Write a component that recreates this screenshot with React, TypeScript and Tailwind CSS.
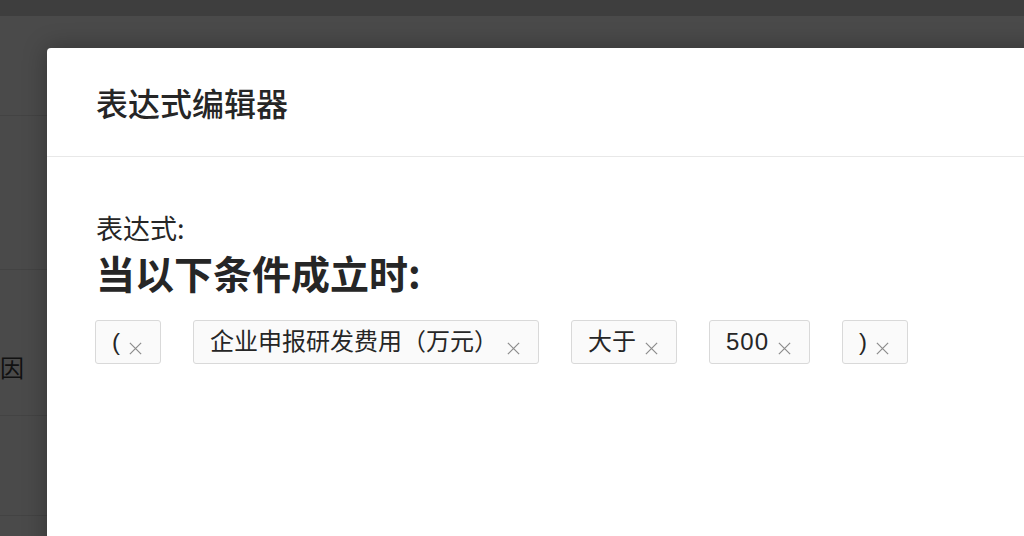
import { ReactNode } from 'react'

const font = { fontFamily: '"Noto Sans CJK SC", "Noto Sans", sans-serif' }

function CloseIcon() {
  return (
    <svg viewBox="0 0 16 16" className="h-[15px] w-[15px] shrink-0 translate-y-[6px] text-[#8c8c8c]" fill="none" stroke="currentColor" strokeWidth="1.3">
      <path d="M2 2 L14 14 M14 2 L2 14" />
    </svg>
  )
}

function Tag({ children, wide }: { children: ReactNode; wide?: boolean }) {
  return (
    <div className="flex h-[44px] items-center gap-[8px] rounded-[3px] border border-[#d9d9d9] bg-[#fafafa] pl-4 pr-[17px] text-[24px] leading-none text-[#262626]">
      <span
        className={wide ? 'tracking-[1px]' : ''}
        style={{ fontFamily: '"Liberation Sans", "Noto Sans CJK SC", sans-serif' }}
      >
        {children}
      </span>
      <CloseIcon />
    </div>
  )
}

export default function App() {
  const tags = ['(', '企业申报研发费用（万元）', '大于', '500', ')']

  return (
    <div className="relative h-[536px] w-[1024px] overflow-hidden bg-[#4a4a4a]" style={font}>
      {/* page behind the mask */}
      <div className="h-[16px] bg-[#3e3e3e]" />
      <div className="h-[100px] border-b border-[#434343]" />
      <div className="h-[154px] border-b border-[#434343]" />
      <div className="h-[146px] border-b border-[#434343] pt-[79px] text-[24px] leading-[36px] text-[#111]">
        <span>因</span>
      </div>
      <div className="h-[100px] border-b border-[#434343]" />

      {/* modal */}
      <div className="absolute left-[47px] top-[48px] h-[520px] w-[1000px] rounded-tl-[4px] bg-white shadow-[0_0_24px_rgba(0,0,0,0.3)]">
        <div className="flex h-[109px] items-center border-b border-[#e8e8e8] pl-[49px]">
          <h2 className="text-[32px] font-medium text-[#262626]">表达式编辑器</h2>
        </div>
        <div className="px-[48px] pt-[53px]">
          <div className="pl-px text-[27px] leading-[36px] text-[#262626]">表达式:</div>
          <div className="mt-[2px] pl-px text-[39px] font-bold leading-[48px] text-[#262626]">当以下条件成立时:</div>
          <div className="mt-[24px] flex gap-[32px]">
            {tags.map((t) => (
              <Tag key={t} wide={t === '500'}>
                {t}
              </Tag>
            ))}
          </div>
        </div>
      </div>
    </div>
  )
}
